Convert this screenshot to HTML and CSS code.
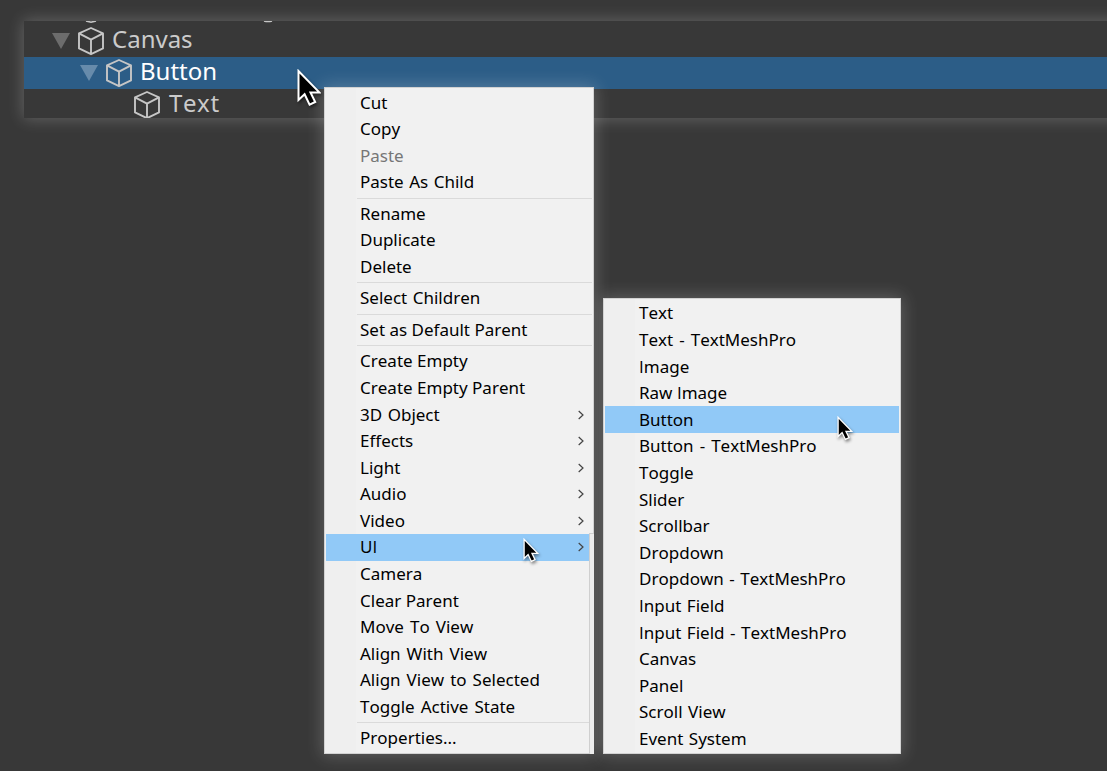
FILE: index.html
```
<!DOCTYPE html>
<html lang="en">
<head>
<meta charset="utf-8">
<title>Hierarchy</title>
<link rel="stylesheet" href="styles.css">
</head>
<body>
<svg class="defs" width="0" height="0" aria-hidden="true">
  <symbol id="cube" viewBox="0 0 28 30"><path d="M14 2 L26 7.3 V22.4 L14 28.2 L2 22.4 V7.3 Z M2 7.3 L14 13.6 L26 7.3 M14 13.6 V28.2" fill="none" stroke="#c6c6c6" stroke-width="1.9" stroke-linejoin="round"/></symbol>
  <symbol id="pointer" viewBox="0 0 24 38"><path d="M1.5 2 V31 L7.6 25.2 L12.6 35.6 L18.2 33 L13.5 23.4 H22.3 Z" fill="#000" stroke="#fff" stroke-width="2" stroke-linejoin="miter"/></symbol>
</svg>
<main class="hierarchy">
  <div class="row first">
    <svg class="remnant" viewBox="0 0 200 3"><path d="M2 0 L7 1.2 L12 0" fill="none" stroke="#c6c6c6" stroke-width="1.6"/><path d="M180 0 Q184 1.2 188 0" fill="none" stroke="#c6c6c6" stroke-width="1.4"/></svg>
    <i class="fold"></i><svg class="cube"><use href="#cube"/></svg><span>Canvas</span>
  </div>
  <div class="row selected"><i class="fold"></i><svg class="cube"><use href="#cube"/></svg><span>Button</span></div>
  <div class="row leaf"><svg class="cube"><use href="#cube"/></svg><span>Text</span></div>
</main>

<ul class="menu context">
  <li>Cut</li>
  <li>Copy</li>
  <li class="disabled">Paste</li>
  <li class="roomy">Paste As Child</li>
  <li class="sep"></li>
  <li>Rename</li>
  <li>Duplicate</li>
  <li>Delete</li>
  <li class="sep"></li>
  <li class="roomy">Select Children</li>
  <li class="sep"></li>
  <li>Set as Default Parent</li>
  <li class="sep"></li>
  <li>Create Empty</li>
  <li>Create Empty Parent</li>
  <li class="sub roomy">3D Object<svg viewBox="0 0 6 10"><path d="M.7 1 L5 5 L.7 9"/></svg></li>
  <li class="sub">Effects<svg viewBox="0 0 6 10"><path d="M.7 1 L5 5 L.7 9"/></svg></li>
  <li class="sub">Light<svg viewBox="0 0 6 10"><path d="M.7 1 L5 5 L.7 9"/></svg></li>
  <li class="sub">Audio<svg viewBox="0 0 6 10"><path d="M.7 1 L5 5 L.7 9"/></svg></li>
  <li class="sub">Video<svg viewBox="0 0 6 10"><path d="M.7 1 L5 5 L.7 9"/></svg></li>
  <li class="sub active"><span>U<b>I</b></span><svg viewBox="0 0 6 10"><path d="M.7 1 L5 5 L.7 9"/></svg></li>
  <li>Camera</li>
  <li>Clear Parent</li>
  <li class="wide">Move To View</li>
  <li class="wide">Align With View</li>
  <li class="wide">Align View to Selected</li>
  <li class="wide">Toggle Active State</li>
  <li class="sep"></li>
  <li>Properties...</li>
</ul>

<ul class="menu submenu">
  <li>Text</li>
  <li class="wide">Text - TextMeshPro</li>
  <li><span><b>I</b>mage</span></li>
  <li><span>Raw <b>I</b>mage</span></li>
  <li class="active">Button</li>
  <li class="wide">Button - TextMeshPro</li>
  <li>Toggle</li>
  <li>Slider</li>
  <li>Scrollbar</li>
  <li>Dropdown</li>
  <li class="roomy">Dropdown - TextMeshPro</li>
  <li class="roomy"><span><b>I</b>nput Field</span></li>
  <li class="roomy"><span><b>I</b>nput Field - TextMeshPro</span></li>
  <li>Canvas</li>
  <li>Panel</li>
  <li class="roomy">Scroll View</li>
  <li class="roomy">Event System</li>
</ul>

<svg class="pointer large"><use href="#pointer"/></svg>
<svg class="pointer on-ui"><use href="#pointer"/></svg>
<svg class="pointer on-button"><use href="#pointer"/></svg>
</body>
</html>
```
FILE: styles.css
```
* { box-sizing: border-box; }
body {
  margin: 0;
  height: 771px;
  padding: 21px 0 0 24px;
  overflow: hidden;
  position: relative;
  background: #383838;
  font-family: "Noto Sans", "Open Sans", sans-serif;
  font-kerning: none;
}
.defs { position: absolute; }

.hierarchy {
  height: 97px;
  width: 1120px;
  background: #383838;
  box-shadow: 0 0 15px 1px rgba(255, 255, 255, .22);
  color: #cbcbcb;
  font-size: 24px;
}
.row { display: flex; align-items: center; height: 32px; line-height: 32px; padding-left: 56px; position: relative; }
.row.first { height: 36px; padding: 4px 0 0 28px; }
.row.selected { background: #2c5d87; color: #fff; }
.row.leaf { height: 29px; padding-left: 109px; align-items: flex-start; }
.row span { margin-left: 7px; position: relative; top: -2px; }
.row.leaf span { margin-left: 8px; letter-spacing: .6px; }
.fold { width: 18px; height: 16px; margin-right: 7px; background: #6c6c6c; clip-path: polygon(0 0, 100% 0, 50% 100%); }
.selected .fold { background: #678bab; }
.cube { width: 28px; height: 30px; flex: none; }
.leaf .cube { margin-top: 1px; clip-path: inset(0 0 2px); }
.remnant { position: absolute; left: 60px; top: 0; width: 200px; height: 3px; }

.menu {
  position: absolute;
  margin: 0;
  padding: 1.3px 1px 0;
  list-style: none;
  background: linear-gradient(90deg, #efefef 31px, #f1f1f1 31px);
  border: 1px solid #d2d2d2;
  box-shadow: 0 0 16px 2px rgba(255, 255, 255, .2);
  color: #000;
  font-size: 17px;
}
.context { left: 324px; top: 87px; width: 270px; height: 667px; }
.submenu { left: 603px; top: 298px; width: 298px; height: 456px; padding-top: 1.1px; }
.context::after {
  content: "";
  position: absolute;
  right: -1px;
  top: 445px;
  bottom: -1px;
  width: 4px;
  border: solid #cfcfcf;
  border-width: 1px 0 0 1px;
  background: #ededed;
}
.menu li { display: flex; align-items: center; height: 26.6px; line-height: 26px; padding-left: 34px; white-space: nowrap; }
.menu li.sep { height: 4.85px; padding: 0; margin-left: 31px; }
.menu li.sep::before { content: ""; height: 1px; width: 100%; background: #dadada; }
.menu li.disabled { color: #767676; }
.menu li.active { background: #91c9f7; }
.menu li.sub { justify-content: space-between; padding-right: 8px; }
.menu li.roomy { word-spacing: 1.1px; }
.menu li.wide { word-spacing: 1.6px; }
.menu b { font-family: "Open Sans"; font-weight: 400; }
.sub svg { width: 6px; height: 10px; fill: none; stroke: #444; stroke-width: 1.2; }

.pointer { position: absolute; filter: drop-shadow(1px 2px 1.5px rgba(0, 0, 0, .45)); }
.large { left: 297px; top: 69px; width: 24px; height: 38px; }
.on-ui { left: 523px; top: 538px; width: 16px; height: 25px; }
.on-button { left: 837px; top: 416px; width: 16px; height: 25px; }
```
